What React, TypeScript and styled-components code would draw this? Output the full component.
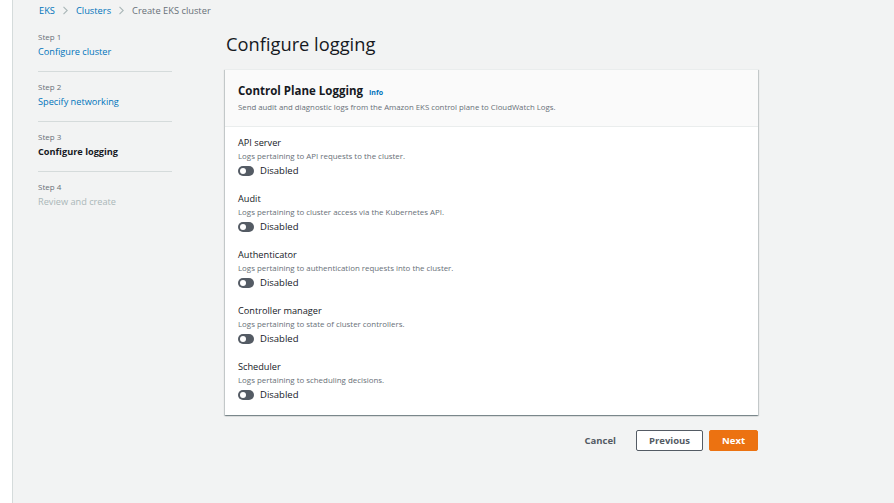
import React from 'react';
import styled, { createGlobalStyle } from 'styled-components';

const GlobalStyle = createGlobalStyle`
	html, body {
		margin: 0;
		padding: 0;
		background: #ffffff;
		font-family: 'Open Sans', 'Noto Sans', sans-serif;
		color: #16191f;
	}
`;

const Page = styled.div`
	display: flex;
	height: 503px;
	overflow: hidden;
`;

const Gutter = styled.div`
	width: 12px;
	flex-shrink: 0;
	background: #ffffff;
`;

const Main = styled.main`
	flex: 1;
	background: #f2f3f3;
	border-left: 1px solid #d5dbdb;
	padding: 2px 0 0 25px;
`;

const Breadcrumbs = styled.nav`
	display: flex;
	align-items: center;
	gap: 7px;
	height: 16px;
	padding-left: 1px;
	font-size: 9.3px;
`;

const Crumb = styled.span<{ $current?: boolean }>`
	color: ${(p) => (p.$current ? '#687078' : '#0073bb')};
`;

const Chevron = () => (
	<svg width="7" height="9" viewBox="0 0 7 9">
		<path d="M1.5 0.8 L5.2 4.5 L1.5 8.2" fill="none" stroke="#aab7b8" strokeWidth="1.1" />
	</svg>
);

const Body = styled.div`
	display: flex;
	gap: 53px;
`;

const SideNav = styled.ol`
	list-style: none;
	margin: 0;
	padding: 0;
	width: 134px;
	flex-shrink: 0;
`;

const Step = styled.li`
	padding: 9px 0 12px;
	border-bottom: 1px solid #d5dbdb;

	&:first-child {
		padding-top: 13px;
	}
	&:last-child {
		border-bottom: none;
	}
`;

const StepLabel = styled.div`
	font-size: 8px;
	line-height: 12px;
	color: #687078;
`;

const StepName = styled.div<{ $state: 'link' | 'active' | 'disabled' }>`
	margin-top: 2px;
	font-size: 9.2px;
	line-height: 14px;
	font-weight: ${(p) => (p.$state === 'active' ? 700 : 400)};
	color: ${(p) =>
		p.$state === 'link' ? '#0073bb' : p.$state === 'active' ? '#16191f' : '#aab7b8'};
`;

const Content = styled.section`
	width: 533px;
`;

const Title = styled.h1`
	margin: 0;
	padding: 13px 0 0 1px;
	height: 51px;
	box-sizing: border-box;
	font-size: 18.3px;
	line-height: 26px;
	font-weight: 400;
	color: #16191f;
`;

const Card = styled.div`
	background: #ffffff;
	box-shadow: 0 1px 1px 0 rgba(0, 28, 36, 0.3), 1px 1px 1px 0 rgba(0, 28, 36, 0.15),
		-1px 1px 1px 0 rgba(0, 28, 36, 0.15);
	border-top: 1px solid #eaeded;
`;

const CardHeader = styled.div`
	background: #fafafa;
	border-bottom: 1px solid #eaeded;
	padding: 13px 13px 13px;
`;

const CardTitle = styled.div`
	display: flex;
	align-items: baseline;
	gap: 6px;
	font-size: 11.5px;
	line-height: 16px;
	font-weight: 700;
`;

const InfoLink = styled.span`
	font-size: 7px;
	font-weight: 700;
	color: #0073bb;
`;

const CardSubtitle = styled.div`
	font-size: 7.8px;
	line-height: 12px;
	color: #687078;
`;

const CardBody = styled.div`
	display: flex;
	flex-direction: column;
	gap: 15px;
	padding: 10px 13px 13px;
`;

const Field = styled.div`
	display: flex;
	flex-direction: column;
`;

const FieldLabel = styled.div`
	font-size: 9.2px;
	line-height: 12px;
	color: #16191f;
`;

const FieldDesc = styled.div`
	margin-top: 1px;
	font-size: 7.9px;
	line-height: 12px;
	color: #687078;
`;

const ToggleRow = styled.label`
	display: flex;
	align-items: center;
	gap: 6px;
	margin-top: 2px;
	height: 13px;
	padding-bottom: 1px;
	font-size: 9.5px;
	color: #16191f;
`;

const Track = styled.span<{ $on?: boolean }>`
	position: relative;
	width: 16px;
	height: 10px;
	border-radius: 5px;
	background: ${(p) => (p.$on ? '#0073bb' : '#545b64')};

	&::after {
		content: '';
		position: absolute;
		top: 2px;
		left: ${(p) => (p.$on ? '8px' : '2px')};
		width: 6px;
		height: 6px;
		border-radius: 50%;
		background: #ffffff;
	}
`;

const Actions = styled.div`
	display: flex;
	justify-content: flex-end;
	align-items: center;
	gap: 6px;
	margin-top: 15px;
`;

const Button = styled.button<{ $variant: 'link' | 'normal' | 'primary' }>`
	box-sizing: border-box;
	height: 21px;
	padding: 0 12px;
	font-family: inherit;
	font-size: 9.5px;
	font-weight: 700;
	border-radius: 2px;
	cursor: pointer;
	color: ${(p) => (p.$variant === 'primary' ? '#ffffff' : '#545b64')};
	background: ${(p) => (p.$variant === 'primary' ? '#ec7211' : p.$variant === 'normal' ? '#ffffff' : 'transparent')};
	border: 1px solid
		${(p) => (p.$variant === 'primary' ? '#ec7211' : p.$variant === 'normal' ? '#545b64' : 'transparent')};
	margin-right: ${(p) => (p.$variant === 'link' ? '1px' : '0')};
`;

const steps = [
	{ n: 1, name: 'Configure cluster', state: 'link' as const },
	{ n: 2, name: 'Specify networking', state: 'link' as const },
	{ n: 3, name: 'Configure logging', state: 'active' as const },
	{ n: 4, name: 'Review and create', state: 'disabled' as const },
];

const logTypes = [
	{ name: 'API server', desc: 'Logs pertaining to API requests to the cluster.' },
	{ name: 'Audit', desc: 'Logs pertaining to cluster access via the Kubernetes API.' },
	{ name: 'Authenticator', desc: 'Logs pertaining to authentication requests into the cluster.' },
	{ name: 'Controller manager', desc: 'Logs pertaining to state of cluster controllers.' },
	{ name: 'Scheduler', desc: 'Logs pertaining to scheduling decisions.' },
];

export default function App() {
	return (
		<>
			<GlobalStyle />
			<Page>
				<Gutter />
				<Main>
					<Breadcrumbs>
						<Crumb>EKS</Crumb>
						<Chevron />
						<Crumb>Clusters</Crumb>
						<Chevron />
						<Crumb $current>Create EKS cluster</Crumb>
					</Breadcrumbs>
					<Body>
						<SideNav>
							{steps.map((s) => (
								<Step key={s.n}>
									<StepLabel>Step {s.n}</StepLabel>
									<StepName $state={s.state}>{s.name}</StepName>
								</Step>
							))}
						</SideNav>
						<Content>
							<Title>Configure logging</Title>
							<Card>
								<CardHeader>
									<CardTitle>
										Control Plane Logging <InfoLink>Info</InfoLink>
									</CardTitle>
									<CardSubtitle>
										Send audit and diagnostic logs from the Amazon EKS control plane to CloudWatch Logs.
									</CardSubtitle>
								</CardHeader>
								<CardBody>
									{logTypes.map((l) => (
										<Field key={l.name}>
											<FieldLabel>{l.name}</FieldLabel>
											<FieldDesc>{l.desc}</FieldDesc>
											<ToggleRow>
												<Track />
												Disabled
											</ToggleRow>
										</Field>
									))}
								</CardBody>
							</Card>
							<Actions>
								<Button $variant="link">Cancel</Button>
								<Button $variant="normal">Previous</Button>
								<Button $variant="primary">Next</Button>
							</Actions>
						</Content>
					</Body>
				</Main>
			</Page>
		</>
	);
}
